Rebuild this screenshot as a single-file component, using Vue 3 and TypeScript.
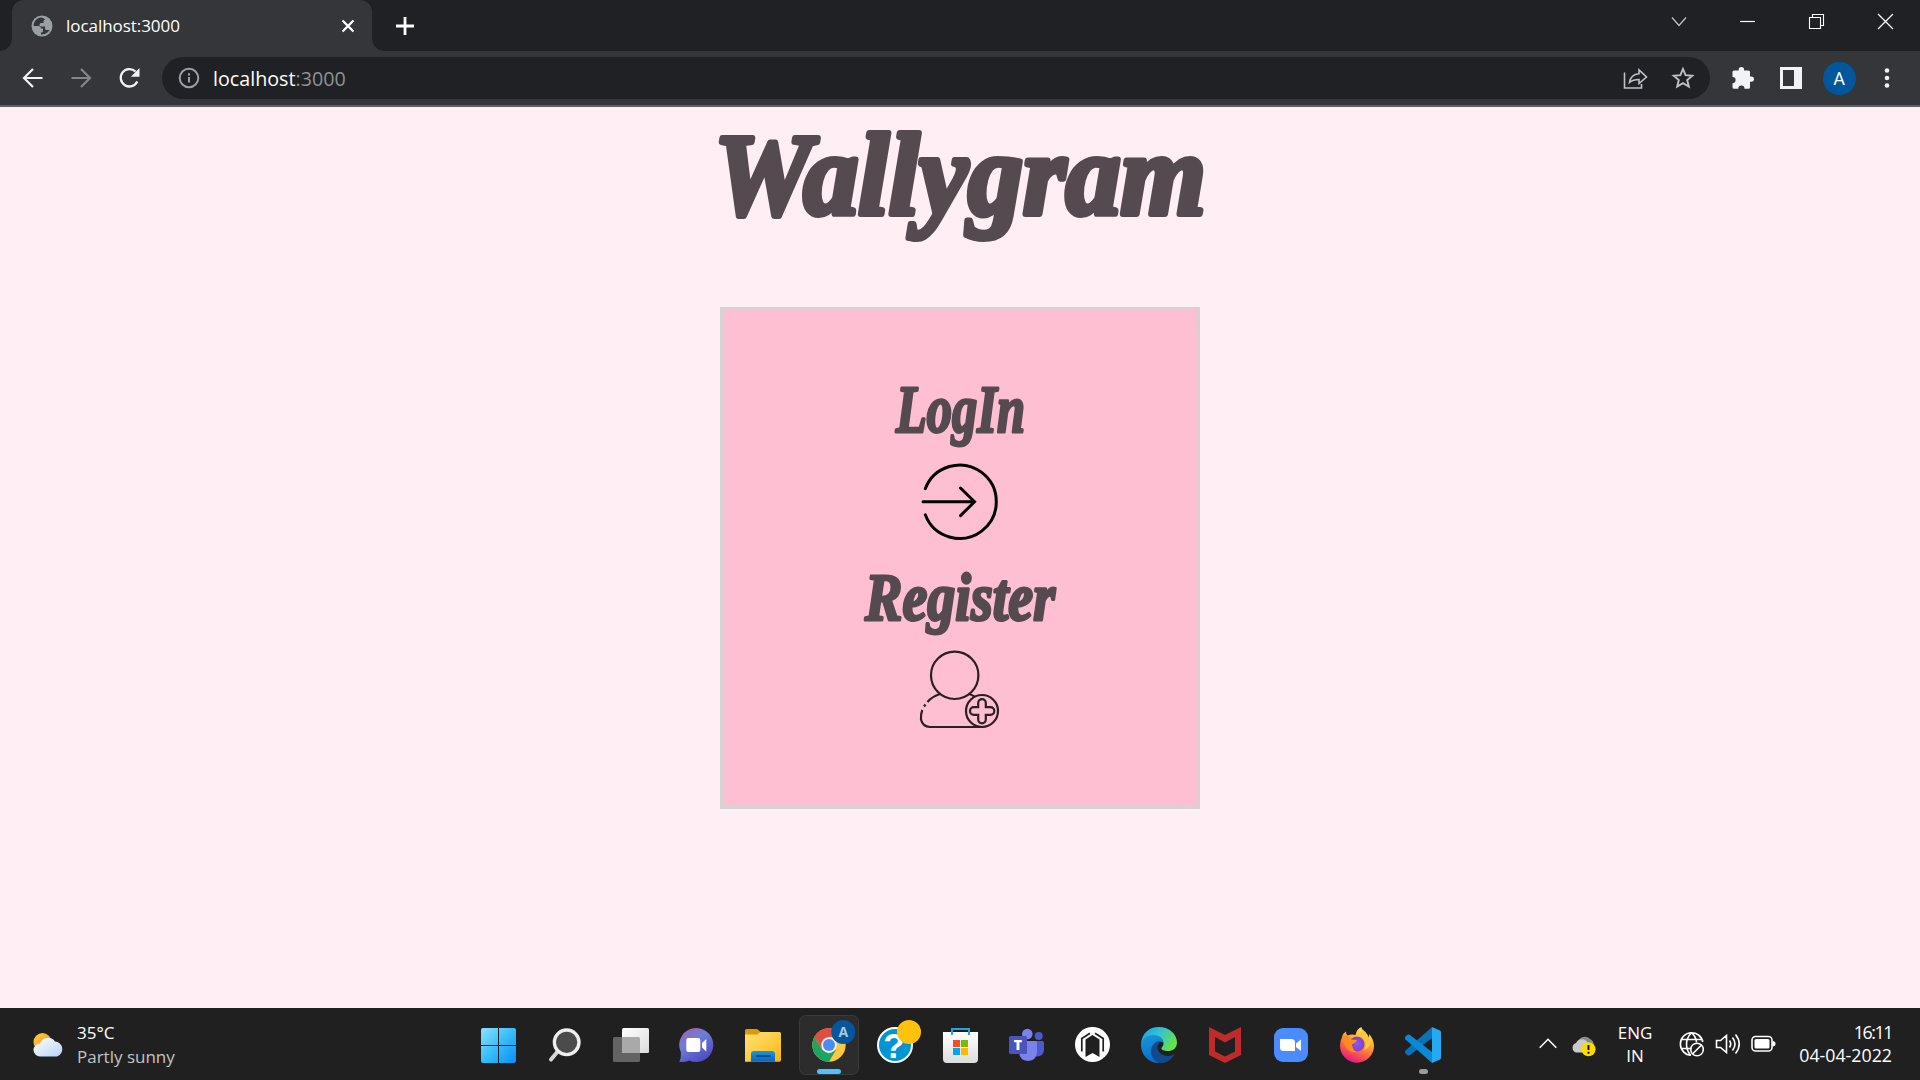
<script setup lang="ts">
import { ref } from 'vue'

const heading = ref('Wallygram')
const host = ref('localhost')
const port = ref(':3000')
</script>

<template>
  <div class="screen">
    <header class="tabstrip">
      <div class="tab">
        <svg class="favicon" width="22" height="22" viewBox="0 0 22 22">
          <circle cx="11" cy="11" r="10.5" fill="#9aa0a6" />
          <path d="M8.5 2.7C5 3.8 2.600 7 2.600 11l4.800 0c1.600 0 2.600 1 2.600 2.500l2 0 0 2.500c0 1-.8 1.500-2 1.500l0 1.900c4 .3 7-1.600 8.500-4.400l-2.700 0c-1.200 0-1.800-.7-1.800-1.800l0-1.700-3.800 0c-1.300 0-1.700-.8-1.700-1.700 0-1.200.9-1.800 2-1.800l2 0 0-1.500c0-1 .7-1.700 1.700-1.700C12.700 2.800 10.500 2.300 8.500 2.700z" fill="#35363a" />
        </svg>
        <span class="tab-title">{{ host }}{{ port }}</span>
        <svg class="tab-close" width="16" height="16" viewBox="0 0 16 16">
          <path d="M2.500 2.500l11 11M13.500 2.500l-11 11" stroke="#fff" stroke-width="2.300" />
        </svg>
      </div>
      <svg class="plus" width="18" height="18" viewBox="0 0 18 18">
        <path d="M9 0v18M0 9h18" stroke="#fff" stroke-width="2.800" />
      </svg>
      <div class="window-controls">
        <svg width="69" height="51"><path d="M28 17.500l7 8 7-8" fill="none" stroke="#c4c5c7" stroke-width="1.200" /></svg>
        <svg width="69" height="51"><path d="M27 21.500h15" stroke="#fff" stroke-width="1.200" /></svg>
        <svg width="69" height="51"><path d="M27.500 17.500h11v11h-11zM30.500 17.500v-3h11v11h-3" fill="none" stroke="#fff" stroke-width="1.100" /></svg>
        <svg width="69" height="51"><path d="M27 14l15 15M42 14l-15 15" stroke="#fff" stroke-width="1.300" /></svg>
      </div>
    </header>

    <nav class="toolbar">
      <svg width="48" height="54"><path d="M33.500 27H15.500M24 18l-9 9 9 9" fill="none" stroke="#f1f3f4" stroke-width="2.200" /></svg>
      <svg width="48" height="54"><path d="M14.500 27h18M24 18l9 9-9 9" fill="none" stroke="#85868a" stroke-width="2.200" /></svg>
      <svg width="48" height="54">
        <path d="M32.300 30.500a8.700 8.700 0 1 1-1.800-10" fill="none" stroke="#f1f3f4" stroke-width="2.300" />
        <path d="M34.500 17v8.700h-8.700z" fill="#f1f3f4" />
      </svg>
      <div class="omnibox">
        <svg class="info" width="22" height="22" viewBox="0 0 22 22">
          <circle cx="11" cy="11" r="9.300" fill="none" stroke="#9aa0a6" stroke-width="2" />
          <path d="M11 10v5.500M11 6.300v2.200" stroke="#9aa0a6" stroke-width="2" />
        </svg>
        <span class="url">{{ host }}<span class="port">{{ port }}</span></span>
        <svg width="48" height="42">
          <path d="M13.500 15.500v15.500h17v-4M18.500 25.500c1-6.500 4.500-8.500 9.500-8.800v-3.900l7.500 7.200-7.500 6.500v-4c-4.500 0-7 .8-9.500 3z" fill="none" stroke="#bdc1c6" stroke-width="1.600" />
        </svg>
        <svg width="48" height="42">
          <path d="M24 12l2.600 6.100 6.700.6-5.100 4.400 1.600 6.500L24 26.100l-5.800 3.500 1.600-6.500-5.100-4.400 6.700-.6z" fill="none" stroke="#bdc1c6" stroke-width="1.900" />
        </svg>
      </div>
      <div class="toolbar-actions">
        <svg width="48" height="54">
          <path d="M13.500 21q0-1.500 1.500-1.500h4.700v-.7a2.700 2.700 0 0 1 5.400 0v.7h4.400q1.500 0 1.500 1.500v4.400h1.300a2.700 2.700 0 0 1 0 5.400H31v5.400q0 1.500-1.500 1.500h-4a3.100 3.100 0 0 0-6.200 0h-4.300q-1.500 0-1.500-1.500v-4a3.100 3.100 0 0 0 0-6.200z" fill="#f1f3f4" />
        </svg>
        <svg width="48" height="54">
          <rect x="13" y="16" width="22" height="22" fill="#f1f3f4" />
          <rect x="16" y="19" width="11" height="16" fill="#35363a" />
        </svg>
        <span class="avatar-cell"><span class="avatar">A</span></span>
        <svg width="48" height="54"><g fill="#f1f3f4"><circle cx="24" cy="19.500" r="2.300" /><circle cx="24" cy="27" r="2.300" /><circle cx="24" cy="34.500" r="2.300" /></g></svg>
      </div>
    </nav>

    <main class="page">
      <h1>
        <svg width="560" height="180" class="script">
          <text x="34" y="107" font-size="117" textLength="492" lengthAdjust="spacingAndGlyphs" stroke-width="6">{{ heading }}</text>
        </svg>
      </h1>
      <section class="card">
        <a class="entry">
          <svg width="240" height="94" class="script">
            <text x="56" y="64" font-size="67" textLength="129" lengthAdjust="spacingAndGlyphs" stroke-width="3">LogIn</text>
          </svg>
          <svg width="90" height="80" viewBox="0 0 90 80">
            <path d="M10.300 26.700a36.700 36.700 0 1 1 0 26.100" fill="none" stroke="#000" stroke-width="3" stroke-linecap="round" />
            <path d="M8 39.800h51M45.500 26l14 13.800-14 13.800" fill="none" stroke="#000" stroke-width="3" stroke-linecap="round" />
          </svg>
        </a>
        <a class="entry">
          <svg width="240" height="94" class="script">
            <text x="25" y="64" font-size="67" textLength="190" lengthAdjust="spacingAndGlyphs" stroke-width="3">Register</text>
          </svg>
          <svg width="90" height="80" viewBox="0 0 90 80" fill="none" stroke="#2a2023" stroke-width="2.200">
            <circle cx="39.700" cy="25.300" r="23.700" />
            <path d="M25 44Q17 46.500 12.500 52M10.500 54.500l-1.500 2M7.300 60Q5.500 64.500 6 69.500q1.500 7 9 7.500h52M54 44q3 .8 6 2.800" />
            <circle cx="67" cy="61" r="16" />
            <path d="M63.200 53a3.800 3.800 0 0 1 7.600 0v4.200h4.700a3.800 3.800 0 0 1 0 7.600h-4.700v4.700a3.800 3.800 0 0 1-7.600 0v-4.700h-4.400a3.800 3.800 0 0 1 0-7.600h4.400z" />
          </svg>
        </a>
      </section>
    </main>

    <footer class="taskbar">
      <div class="weather">
        <svg width="32" height="26" viewBox="0 0 32 26">
          <defs>
            <linearGradient id="sun" x2="1" y2="1"><stop stop-color="#fdd044" /><stop offset="1" stop-color="#f09010" /></linearGradient>
            <linearGradient id="cloud" x2="1" y2="1"><stop stop-color="#fff" /><stop offset="1" stop-color="#b5d5f3" /></linearGradient>
          </defs>
          <circle cx="9.500" cy="10" r="9" fill="url(#sun)" />
          <path d="M7 24.500a6.500 6.500 0 0 1 0-13A8.500 8.500 0 0 1 22 9.500a7.700 7.700 0 0 1 2 15z" fill="url(#cloud)" />
        </svg>
        <div class="weather-text"><span>35°C</span><span class="muted">Partly sunny</span></div>
      </div>

      <div class="apps">
        <svg class="app">
          <defs><linearGradient id="win" x1="16" y1="20" x2="51" y2="55" gradientUnits="userSpaceOnUse"><stop stop-color="#8fe0ff" /><stop offset=".5" stop-color="#35bdfb" /><stop offset="1" stop-color="#0a8df5" /></linearGradient></defs>
          <path d="M18 20h15v17H16V22q0-2 2-2zM34 20h15q2 0 2 2v15H34zM16 38h17v17H18q-2 0-2-2zM34 38h17v15q0 2-2 2H34z" fill="url(#win)" />
        </svg>
        <svg class="app">
          <path d="M27.500 42.500L20 51.500" stroke="#d5d8da" stroke-width="4" stroke-linecap="round" />
          <circle cx="35.700" cy="34.300" r="12.300" fill="#4b4b4b" stroke="#eceeef" stroke-width="3.400" />
        </svg>
        <svg class="app">
          <defs><linearGradient id="tv" x2="1" y2="1"><stop stop-color="#fff" /><stop offset="1" stop-color="#dcdcdc" /></linearGradient></defs>
          <rect x="16" y="29" width="27" height="25" rx="1.500" fill="#636363" />
          <rect x="25" y="20" width="27" height="25" rx="1.500" fill="url(#tv)" />
          <path d="M25 29h16.500q1.500 0 1.500 1.500V45H26.500q-1.500 0-1.500-1.500z" fill="#a9a9a9" />
        </svg>
        <svg class="app">
          <defs><linearGradient id="chat" x2=".6" y2="1"><stop stop-color="#a15fb0" /><stop offset=".45" stop-color="#6f7ed6" /><stop offset="1" stop-color="#4f4cc4" /></linearGradient></defs>
          <path d="M33.300 20a17 17 0 1 1-7 32.500Q22 54.500 16.300 54q2-3.500 1.600-9.500A17 17 0 0 1 33.300 20z" fill="url(#chat)" />
          <rect x="23.300" y="30" width="14" height="14" rx="2" fill="#fff" />
          <path d="M39 35l4.300-4v12.500L39 39.500z" fill="#fff" />
        </svg>
        <svg class="app">
          <defs>
            <linearGradient id="fold" x2="1" y2="1"><stop stop-color="#ffe07a" /><stop offset=".6" stop-color="#fdc93a" /><stop offset="1" stop-color="#fbb40a" /></linearGradient>
            <linearGradient id="foldb" x2="0" y2="1"><stop stop-color="#1a97e2" /><stop offset="1" stop-color="#0a66b5" /></linearGradient>
          </defs>
          <path d="M16 30v-7.500q0-1.500 1.500-1.500h10q1.500 0 3 2l2 2V30z" fill="#dd9a05" />
          <path d="M16 26.500h12.500l3-2.500H50.500q1.500 0 1.500 1.500V52q0 1.700-1.500 1.700H16z" fill="url(#fold)" />
          <path d="M22 53.700V46q0-3 3-3h18q3 0 3 3v7.700z" fill="url(#foldb)" />
          <path d="M28 48h13" stroke="#094c94" stroke-width="2" stroke-linecap="round" />
        </svg>
        <svg class="app">
          <rect x="4.500" y="7.500" width="59" height="59" rx="6" fill="#2c2c2c" stroke="#3a3a3a" />
          <circle cx="34" cy="37" r="16.700" fill="#fbc840" />
          <path d="M34 37L19.540 28.650A16.700 16.700 0 0 1 50.700 37L48.500 28.600H34z" fill="#dd4f43" />
          <path d="M19.540 28.650A16.700 16.700 0 0 1 48.460 28.650H34L26.700 41.200z" fill="#dd4f43" />
          <path d="M19.540 28.650A16.700 16.700 0 0 0 34 53.700L41.300 41.200 34 45.400 26.700 41.200z" fill="#1da462" />
          <circle cx="34" cy="37" r="7.800" fill="#f1f1f1" /><circle cx="34" cy="37" r="6" fill="#4c8bf5" />
          <circle cx="48.300" cy="24" r="12" fill="#05569d" />
          <text x="48.300" y="29" text-anchor="middle" font-size="14" font-weight="700" fill="#a9c8e2">A</text>
        <rect x="22" y="61" width="24" height="5" rx="2.500" fill="#4cc2ff" />
        </svg>
        <svg class="app">
          <circle cx="34" cy="37" r="17" fill="#0096d6" stroke="#fff" stroke-width="2" />
          <text x="33" y="50" text-anchor="middle" font-family="Liberation Sans" font-size="35" font-weight="bold" fill="#fff">?</text>
          <circle cx="48" cy="24" r="12" fill="#ffc20e" />
        </svg>
        <svg class="app">
          <defs><linearGradient id="st" x2="0" y2="1"><stop stop-color="#fff" /><stop offset="1" stop-color="#dcdcdc" /></linearGradient></defs>
          <path d="M16 24h35v27q0 4-4 4H20q-4 0-4-4z" fill="url(#st)" />
          <path d="M25 27v-6h17v6" fill="none" stroke="#1ea5e8" stroke-width="2" />
          <path d="M26 32h7v7h-7z" fill="#f25022" /><path d="M34 32h7v7h-7z" fill="#7fba00" />
          <path d="M26 40h7v7h-7z" fill="#00a4ef" /><path d="M34 40h7v7h-7z" fill="#ffb900" />
        </svg>
        <svg class="app">
          <circle cx="45.700" cy="28" r="4" fill="#5059c9" />
          <path d="M40 33h9.500q1.500 0 1.500 1.500V42q-.5 6-7 6.500h-4z" fill="#5059c9" />
          <circle cx="34.300" cy="26" r="5.300" fill="#7b83eb" />
          <path d="M26 33h16.500q1.500 0 1.500 1.500V44q-.5 8.500-9 9-8.500-.5-9-9z" fill="#7b83eb" />
          <rect x="16" y="28" width="18" height="18" rx="1.500" fill="#4b53bc" />
          <text x="25" y="42" text-anchor="middle" font-size="14" font-weight="800" fill="#fff">T</text>
        </svg>
        <svg class="app">
          <circle cx="33.500" cy="36.500" r="17.500" fill="#fff" />
          <path d="M26.500 49V31.500l7-4.500 7 4.500V49l-7-4z" fill="#202020" />
          <path d="M22.800 43.500V30.500l8.200-5.300M44.200 43.500V30.500L36 25.200" fill="none" stroke="#202020" stroke-width="1.700" />
        </svg>
        <svg class="app">
          <defs>
            <linearGradient id="e1" x2="1" y2=".5"><stop stop-color="#1c9fe0" /><stop offset=".5" stop-color="#30c3d5" /><stop offset="1" stop-color="#66e04d" /></linearGradient>
            <linearGradient id="e2" x2=".3" y2="1"><stop stop-color="#1899dd" /><stop offset="1" stop-color="#0b6bc9" /></linearGradient>
          </defs>
          <path d="M16 36C17 25 24 19 34 19c10.500 0 18 7.500 18 15.500 0 6-4.500 8.500-9 8.500-4 0-6.500-1-6.500-2.500s2-2 2-5c0-4-4-7.500-9.500-7.500-6.500 0-11 3.500-13 8z" fill="url(#e1)" />
          <path d="M16 37c0-6 5.500-10 12.500-10 6 0 10 4 10 8-1.500-2-9-1-11 4s1 15 8 16C24 56 16 47 16 37z" fill="url(#e2)" />
          <path d="M36 33.500c-5-1-10 4-10 10 0 6 5 11.500 11 11.500 5 0 9.500-3.500 12.500-9q-3 2-6.500 2c-6 0-10.500-4-10.500-8.500 0-3 2-5 3.500-6z" fill="#114a8b" />
        </svg>
        <svg class="app">
          <path d="M18 19l16 8 16-8v28L34 55 18 47zM24 29v14.500l10 5 10-5V29l-10 5.500z" fill="#c12a2b" fill-rule="evenodd" />
        </svg>
        <svg class="app">
          <rect x="17" y="20" width="34" height="34" rx="9" fill="#4a8cff" />
          <path d="M23 31h11.500q3.500 0 3.500 3.500V43H26.500Q23 43 23 39.500zM39 35.500l5-4v11.500l-5-4z" fill="#fff" />
        </svg>
        <svg class="app">
          <defs>
            <linearGradient id="ff" x1=".8" y1="0" x2=".35" y2="1"><stop stop-color="#fff44f" /><stop offset=".35" stop-color="#ffb436" /><stop offset=".65" stop-color="#ff6a3c" /><stop offset="1" stop-color="#e31587" /></linearGradient>
            <radialGradient id="ffp"><stop stop-color="#7a5cff" /><stop offset="1" stop-color="#8b3cc9" /></radialGradient>
          </defs>
          <path d="M19 29q1-4 4-5.500 0 3 1.500 4 4-1.500 8-.5Q33.500 21 38.500 19q.5 4 4.500 7.500l2.500 3.500q1-2 .5-4 4.500 4.500 5 11.500A17 17 0 0 1 17 38q0-5 2-9z" fill="url(#ff)" />
          <circle cx="34" cy="36" r="7.500" fill="url(#ffp)" />
          <path d="M19 29q3-2 6-1.500l3 4 6 .5q-1 3.500-5 4 0 5 4.500 8-8 1-11-6-3-4-3.500-9z" fill="#ff8d1e" />
          <path d="M33 28.500q6-1 8.500 3.500 3 5-1 10.500 6-2 6.500-8.500-1-8-8-13-1 5-6 7.500z" fill="#ffc93d" />
        </svg>
        <svg class="app">
          <path d="M43 19L16.500 42.500q-1.200 1.500 0 3l2 1.800q1.200.7 2.500-.3L43 30z" fill="#0873b8" />
          <path d="M43 55L16.500 31.500q-1.200-1.500 0-3l2-1.800q1.200-.7 2.500.3L43 44z" fill="#0a8ad6" />
          <path d="M43 19l8 3.500q1 .7 1 2v25q0 1.300-1 2L43 55z" fill="#25a9f3" />
          <rect x="30" y="61" width="9" height="5" rx="2.500" fill="#9c9c9c" />
        </svg>
      </div>

      <div class="tray">
        <svg width="18" height="72"><path d="M.7 39.700L9 31.200l8.300 8.500" fill="none" stroke="#fff" stroke-width="1.500" /></svg>
        <svg class="onedrive" width="25" height="72">
          <path d="M7 34a7 7 0 0 1 12-3 6 6 0 0 1 0 11H9z" fill="#8b8b8b" />
          <path d="M5 44.500a5 5 0 0 1 0-9.500 6.500 6.500 0 0 1 11.500-.5L16 44.500z" fill="#c9c9c9" />
          <circle cx="17.500" cy="41.300" r="7" fill="#ffdc00" />
          <path d="M17.500 37v5M17.500 43.700v2" stroke="#111" stroke-width="2" />
        </svg>
        <div class="lang"><span>ENG</span><span>IN</span></div>
        <svg class="globe" width="26" height="72" fill="none" stroke="#fff" stroke-width="1.600">
          <path d="M12 47.300A11.300 11.300 0 1 1 23.800 34M1.500 31.500h22M1.500 40.500h11M12.500 24.700q-5 5-5 11.300t4 11.300M12.500 24.700q4.500 4 5 9.500" />
          <circle cx="18" cy="41.500" r="6.300" /><path d="M13.500 46l9-9" />
        </svg>
        <svg class="speaker" width="26" height="72" fill="none" stroke="#fff" stroke-width="1.600">
          <path d="M1.500 32.500h4l6-5v17l-6-5h-4zM14.500 32.500q2.500 3.500 0 7M17.500 29.500q5 6.500 0 13M20.500 26.500q7.500 9.500 0 19" />
        </svg>
        <svg class="battery" width="26" height="72">
          <rect x="1" y="28.500" width="20" height="14.500" rx="3.500" fill="none" stroke="#fff" stroke-width="1.600" />
          <rect x="3.500" y="31" width="15" height="9.500" rx="1.500" fill="#fff" /><path d="M21.500 33q3 0 3 2.700t-3 2.700z" fill="#fff" />
        </svg>
        <div class="clock"><span class="time">16:11</span><span class="date">04-04-2022</span></div>
      </div>
    </footer>
  </div>
</template>

<style>
html, body { margin: 0; overflow: hidden; }
</style>

<style scoped>
.screen { width: 1920px; height: 1080px; display: flex; flex-direction: column; overflow: hidden; font-family: "Open Sans", "Noto Sans", sans-serif; color: #fff; }
svg { display: block; flex: none; }

.tabstrip { height: 51px; background: #202124; display: flex; align-items: center; flex: none; }
.tab { position: relative; width: 360px; height: 51px; margin-left: 12px; padding: 0 16px 0 19px; box-sizing: border-box; background: #35363a; border-radius: 12px 12px 0 0; display: flex; align-items: center; }
.tab::before, .tab::after { content: ""; position: absolute; bottom: 0; width: 12px; height: 12px; }
.tab::before { left: -12px; background: radial-gradient(circle at 0 0, #202124 11.5px, #35363a 12px); }
.tab::after { right: -12px; background: radial-gradient(circle at 100% 0, #202124 11.5px, #35363a 12px); }
.tab-title { margin-left: 13px; font-size: 17px; line-height: 24px; letter-spacing: -0.05px; flex: 1; }
.plus { margin-left: 24px; }
.window-controls { margin-left: auto; display: flex; }

.toolbar { height: 56px; box-sizing: border-box; border-bottom: 2px solid #5f6064; background: #35363a; display: flex; padding-left: 9px; flex: none; }
.omnibox { width: 1548px; height: 42px; margin: 6px 0 0 9px; border-radius: 21px; background: #202124; display: flex; align-items: center; box-sizing: border-box; padding: 0 3px 0 16px; }
.url { margin-left: 13px; padding-top: 1px; font-size: 19.7px; line-height: 28px; flex: 1; }
.port { color: #8e9195; }
.toolbar-actions { display: flex; margin-left: 9px; }
.avatar-cell { width: 48px; height: 54px; display: flex; align-items: center; justify-content: center; }
.avatar { width: 33px; height: 33px; border-radius: 50%; background: #01579b; font: 18px/34px Roboto, sans-serif; text-align: center; }

.page { height: 901px; background: #ffeef3; display: flex; flex-direction: column; align-items: center; flex: none; }
h1 { margin: 0; height: 200px; }
.script { overflow: visible; }
.script text { font-family: "Liberation Serif", serif; font-weight: bold; font-style: italic; fill: #554a4f; stroke: #554a4f; stroke-linejoin: round; }
.card { width: 480px; height: 502px; box-sizing: border-box; border: 3px solid #d3d3d3; background: #ffbfd2; display: flex; flex-direction: column; align-items: center; padding-top: 58px; gap: 14px; }
.entry { display: flex; flex-direction: column; align-items: center; height: 174px; }

.taskbar { height: 72px; background: #202020; display: flex; flex: none; font-size: 17px; line-height: 23px; }
.weather { width: 465px; box-sizing: border-box; padding: 2px 0 0 33px; display: flex; align-items: center; gap: 12px; }
.weather-text { display: flex; flex-direction: column; line-height: 24px; }
.weather-text .muted { color: #c4c4c4; }
.apps { display: flex; }
.app { width: 66px; height: 72px; }
.tray { margin-left: auto; display: flex; align-items: center; padding-right: 28px; }
.onedrive { margin-left: 14px; }
.lang { width: 44px; margin-left: 17px; display: flex; flex-direction: column; align-items: center; }
.globe { margin-left: 22px; }
.speaker { margin-left: 10px; }
.battery { margin-left: 10px; }
.clock { margin-left: 21px; width: 94px; font-size: 17.8px; display: flex; flex-direction: column; align-items: flex-end; white-space: nowrap; }
.time { letter-spacing: -1.4px; }
</style>
